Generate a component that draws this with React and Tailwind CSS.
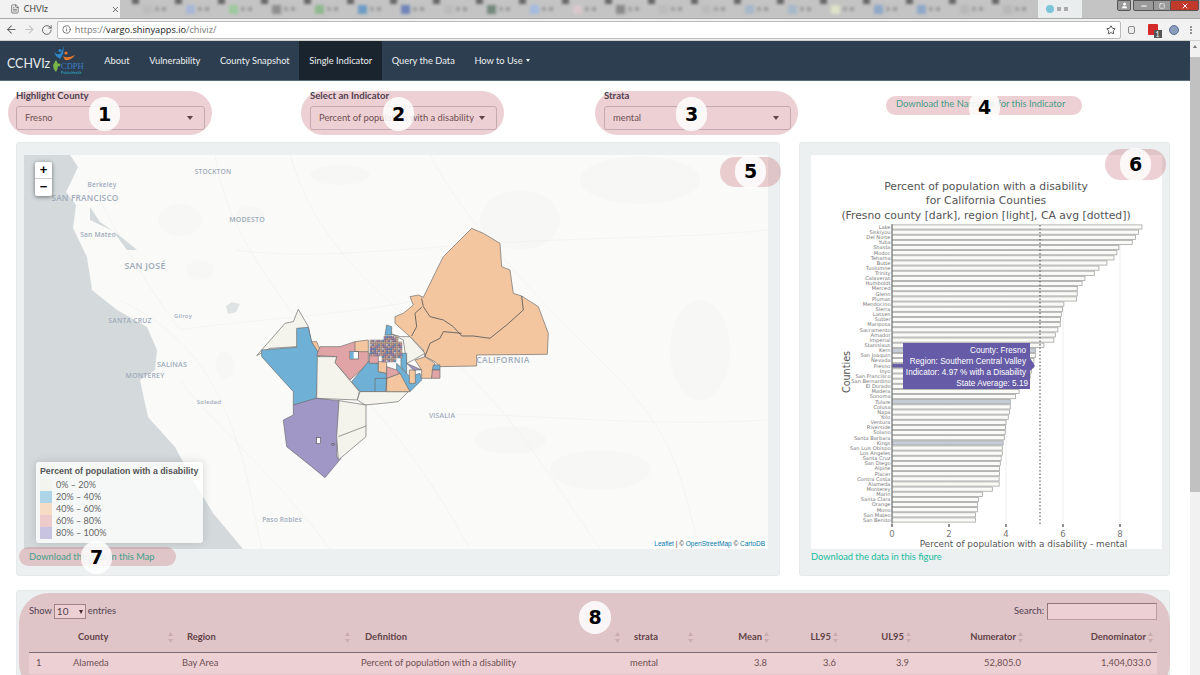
import React from 'react';
import { ArrowLeft, ArrowRight, RotateCw, Info, Star, FileText, X, Minus, Square, User } from 'lucide-react';

const TAB_ICONS = [
  'bg-[#bdbdbd]', 'bg-[#a9b8d8]', 'bg-[#9fc99f]', 'bg-[#8e8e8e]', 'bg-[#8fb88f]', 'bg-[#6f9cc4]', 'bg-[#6f84b8]',
  'bg-[#bcbcbc]', 'bg-[#75887c]', 'bg-[#a5bce0]', 'bg-[#d8c8cc]', 'bg-[#8a8a8a]', 'bg-[#bcbcbc]', 'bg-[#bcbcbc]',
  'bg-[#a8b8c8]', 'bg-[#a8b8c8]', 'bg-[#dde2c8]', 'bg-[#8fa8c8]', 'bg-[#8fa8c8]', 'bg-[#b8b8b8]', 'bg-[#b8b8b8]',
];

const NAV = ['About', 'Vulnerability', 'County Snapshot', 'Single Indicator', 'Query the Data'];

const COUNTIES = [
  ['Lake', 8.77], ['Siskiyou', 8.65], ['Del Norte', 8.54], ['Yuba', 8.43], ['Shasta', 7.96], ['Modoc', 7.89],
  ['Tehama', 7.79], ['Butte', 7.54], ['Tuolumne', 7.26], ['Trinity', 7.1], ['Calaveras', 6.77], ['Humboldt', 6.67],
  ['Merced', 6.5], ['Glenn', 6.5], ['Plumas', 6.47], ['Mendocino', 6.03], ['Sierra', 5.98], ['Lassen', 5.94],
  ['Sutter', 5.91], ['Mariposa', 5.9], ['Sacramento', 5.82], ['Amador', 5.73], ['Imperial', 5.68], ['Stanislaus', 5.33],
  ['Kern', 5.03], ['San Joaquin', 5.03], ['Nevada', 4.98], ['Fresno', 4.97], ['Inyo', 4.9], ['San Francisco', 4.85],
  ['San Bernardino', 4.8], ['El Dorado', 4.7], ['Madera', 4.46], ['Sonoma', 4.33], ['Tulare', 4.15], ['Colusa', 4.15],
  ['Napa', 4.12], ['Yolo', 4.08], ['Ventura', 4.0], ['Riverside', 3.98], ['Solano', 3.97], ['Santa Barbara', 3.94],
  ['Kings', 3.9], ['San Luis Obispo', 3.87], ['Los Angeles', 3.87], ['Santa Cruz', 3.83], ['San Diego', 3.8], ['Alpine', 3.77],
  ['Placer', 3.77], ['Contra Costa', 3.76], ['Alameda', 3.76], ['Monterey', 3.52], ['Marin', 3.17], ['Santa Clara', 3.03],
  ['Orange', 3.0], ['Mono', 3.0], ['San Mateo', 2.93], ['San Benito', 2.93],
];
const REGION = ['Kern', 'Tulare', 'Kings'];

const BLUE = '#6fb1d6';
const ORANGE = '#f3c6a0';
const PINK = '#e0a3a6';
const PURPLE = '#a197c7';
const CREAM = '#f4f3ec';

// traced by eye from the crop, coordinates are crop pixels (3x)
const TRACTS = [
  [ORANGE, '695,55 730,70 780,100 785,170 810,180 820,250 845,258 895,290 925,370 922,433 710,435 710,468 600,470 585,455 555,440 550,420 510,380 465,340 465,320 490,310 520,285 510,260 535,255 550,262 590,180 610,140'],
  [CREAM, '175,298 205,350 215,400 170,410 90,415 50,437 135,340 160,335'],
  [BLUE, '65,420 170,412 170,355 205,352 215,395 240,435 230,540 228,575 205,578 160,585 160,545 65,440'],
  [ORANGE, '215,395 230,395 245,430 240,435'],
  [PINK, '240,410 300,410 345,395 385,425 385,460 330,510 285,458 290,440 230,437'],
  [CREAM, '232,440 290,440 285,458 358,545 352,570 230,565'],
  [BLUE, '335,515 385,455 415,460 415,485 440,490 440,545 360,545'],
  [ORANGE, '345,395 385,390 385,425 345,425'],
  [CREAM, '360,545 430,545 505,545 475,575 430,580 375,585 352,570'],
  [PURPLE, '160,585 228,565 297,572 290,740 303,745 255,803 215,770 140,710 130,630 160,615'],
  [CREAM, '297,572 378,585 378,680 295,750 290,680'],
  [BLUE, '470,460 510,500 540,490 545,510 510,545 470,490'],
  [ORANGE, '440,505 480,490 510,545 437,545'],
  [ORANGE, '415,455 440,455 440,490 415,485'],
  [PINK, '440,470 470,480 480,490 440,505'],
  [ORANGE, '508,480 526,480 526,520 508,520'],
  [CREAM, '450,370 480,380 510,380 555,430 520,450 500,460 490,390'],
  [PURPLE, '500,460 545,480 520,480'],
  [ORANGE, '525,450 555,440 585,460 575,505 545,505 545,480'],
  [BLUE, '580,465 600,465 600,480 577,480'],
  [PINK, '577,480 600,480 600,505 575,505'],
  [BLUE, '440,345 455,350 455,375 435,375'],
  [PINK, '388,430 415,425 415,460 388,460'],
  [BLUE, '483,430 500,430 500,490 483,470'],
];

const CITY_COLORS = [BLUE, PINK, ORANGE, PURPLE, CREAM, PINK, PURPLE, ORANGE];
const CITY_CELLS = [];
for (let r = 0; r < 13; r++) {
  for (let c = 0; c < 16; c++) {
    if ((r < 2 && c < 7) || (r > 9 && c < 6) || (r > 10 && c > 12) || (r < 3 && c > 13)) continue;
    CITY_CELLS.push({ x: 390 + c * 6, y: 378 + r * 6, fill: CITY_COLORS[(r * 5 + c * 3 + r * c * 7) % 8] });
  }
}

const ROADS = [
  'M215 155 C225 210 240 240 290 310 S400 420 470 549',
  'M120 300 C160 320 200 350 225 410 S250 500 262 549',
  'M290 155 C310 220 340 260 420 330 S520 430 600 549',
  'M430 155 C470 230 540 300 610 370 S680 480 700 549',
  'M236 250 C320 262 420 245 560 240 S700 236 768 230',
  'M180 330 C240 320 340 316 420 300',
  'M440 415 C520 412 640 428 768 420',
  'M180 380 C200 410 280 480 330 549',
  'M100 200 C120 240 150 290 180 330',
];

const BLOTCHES = [
  [200, 270, 14, 10], [225, 365, 9, 14], [250, 215, 14, 9], [640, 180, 60, 24], [600, 470, 50, 20],
  [520, 220, 40, 30], [700, 350, 30, 50], [180, 220, 22, 16], [340, 175, 30, 10], [510, 440, 36, 14],
];

const MAP_LABELS = [
  ['STOCKTON', 213, 174, 6.6],
  ['Berkeley', 102, 187, 6.5],
  ['SAN FRANCISCO', 85, 201, 8.3],
  ['MODESTO', 247, 222, 7],
  ['San Mateo', 98, 237, 6.6],
  ['SAN JOSÉ', 145, 269, 8.9],
  ['SANTA CRUZ', 130, 323, 6.8],
  ['Gilroy', 183, 318, 5.9],
  ['SALINAS', 172, 367, 7.1],
  ['MONTEREY', 145, 378, 6.9],
  ['Soledad', 209, 404, 6],
  ['Paso Robles', 282, 522, 6.5],
  ['CALIFORNIA', 503, 363, 8.5],
  ['VISALIA', 442, 418, 6.8],
];

const LEGEND = [
  ['bg-[#f4f3ec]', '0% – 20%'],
  ['bg-[#a6cfe6]', '20% – 40%'],
  ['bg-[#f6d8be]', '40% – 60%'],
  ['bg-[#ecc4c5]', '60% – 80%'],
  ['bg-[#c3bcdd]', '80% – 100%'],
];

const OVALS = [
  'left-[8px] top-[91px] w-[204px] h-[44px] rounded-[22px]',
  'left-[301px] top-[91px] w-[203px] h-[44px] rounded-[22px]',
  'left-[595px] top-[91px] w-[203px] h-[44px] rounded-[22px]',
  'left-[886px] top-[96px] w-[196px] h-[19px] rounded-[10px]',
  'left-[720px] top-[157px] w-[61px] h-[30px] rounded-[15px]',
  'left-[1105px] top-[149px] w-[61px] h-[31px] rounded-[16px]',
  'left-[19px] top-[547px] w-[157px] h-[19px] rounded-[10px]',
  'left-[19px] top-[593px] w-[1151px] h-[100px] rounded-[30px]',
];

const BADGES = [
  ['1', 'left-[89px] top-[97px] w-[31px] h-[34px]'],
  ['2', 'left-[383px] top-[97px] w-[31px] h-[34px]'],
  ['3', 'left-[676px] top-[97px] w-[31px] h-[34px]'],
  ['4', 'left-[969px] top-[90px] w-[31px] h-[34px]'],
  ['5', 'left-[735px] top-[155px] w-[31px] h-[33px]'],
  ['6', 'left-[1120px] top-[148px] w-[31px] h-[33px]'],
  ['7', 'left-[81px] top-[541px] w-[31px] h-[33px]'],
  ['8', 'left-[579px] top-[601px] w-[32px] h-[33px]'],
];

const COLUMNS = [
  { label: '', w: 'w-[37px]' },
  { label: 'County', w: 'w-[109px]', pad: 'pl-[12px] pr-[2px]' },
  { label: 'Region', w: 'w-[179px]', pad: 'pl-[12px] pr-[4px]' },
  { label: 'Definition', w: 'w-[269px]', pad: 'pl-[11px] pr-[3px]' },
  { label: 'strata', w: 'w-[70px]', pad: 'pl-[11px]' },
  { label: 'Mean', w: 'w-[80px]', right: true },
  { label: 'LL95', w: 'w-[69px]', right: true },
  { label: 'UL95', w: 'w-[73px]', right: true },
  { label: 'Numerator', w: 'w-[112px]', right: true },
  { label: 'Denominator', w: 'w-[130px]', right: true },
];

const ROW = ['1', 'Alameda', 'Bay Area', 'Percent of population with a disability', 'mental', '3.8', '3.6', '3.9', '52,805.0', '1,404,033.0'];

const SortIcon = () => (
  <svg width="5" height="11" viewBox="0 0 5 11" className="shrink-0">
    <path d="M2.5 0 L5 4 H0 Z M2.5 11 L0 7 H5 Z" fill="#cfcfcf" />
  </svg>
);

const Caret = () => <span className="w-0 h-0 border-x-[3.5px] border-x-transparent border-t-[4px] border-t-[#444]" />;

const SelectBox = ({ label, value, width }) => (
  <div className="flex flex-col">
    <span className="text-[9.6px] font-bold text-[#2c3e50] leading-[12px] mt-[9px] mb-[4px]">{label}</span>
    <div className={`${width} h-[24px] bg-white border border-[#c8cdd0] rounded-[3px] flex items-center justify-between pl-[8px] pr-[11px] text-[9.4px] text-[#555] whitespace-nowrap`}>
      <span>{value}</span>
      <Caret />
    </div>
  </div>
);

const ChromeBar = () => (
  <>
    <div className="h-[18px] bg-[#c4c4c4] flex items-stretch relative overflow-hidden">
      <div className="w-[120px] bg-[#f2f2f2] flex items-center pl-[10px] gap-[4px] text-[8.5px] text-[#444] shrink-0">
        <FileText size={10} strokeWidth={1.5} />
        <span className="w-[85px]">CHVIz</span>
        <X size={9} strokeWidth={2} />
      </div>
      <div className="w-[15px] shrink-0" />
      {TAB_ICONS.map((c, i) => (
        <div key={i} className="w-[43px] shrink-0 flex items-center gap-[3px] pl-[8px] relative">
          <span className="absolute left-[-3px] top-[-2px] w-[7px] h-[6px] bg-[#666] blur-[1.5px]" />
          <span className={`${c} w-[9px] h-[9px] blur-[1.5px]`} />
          <span className="w-[4px] h-[4px] bg-[#a0a0a0] blur-[1.5px]" />
          <span className="w-[4px] h-[4px] bg-[#999] blur-[1.5px]" />
        </div>
      ))}
      <div className="w-[44px] shrink-0 bg-[#e9eded] flex items-center gap-[3px] pl-[8px] blur-[0.6px]">
        <span className="w-[8px] h-[8px] rounded-full bg-[#7cc4d8]" />
        <span className="w-[4px] h-[4px] bg-[#aaa]" />
        <span className="w-[4px] h-[4px] bg-[#aaa]" />
      </div>
      <div className="absolute right-[1px] top-0 h-[11px] flex text-white">
        <span className="w-[14px] bg-[#9a9a9a] border border-[#555] rounded-b-[2px] flex items-center justify-center mr-[2px]"><User size={7} fill="white" /></span>
        <span className="w-[21px] bg-[#9a9a9a] border border-[#555] flex items-center justify-center rounded-bl-[2px]"><Minus size={8} strokeWidth={3} /></span>
        <span className="w-[16px] bg-[#9a9a9a] border-y border-[#555] flex items-center justify-center"><Square size={6} strokeWidth={2.5} /></span>
        <span className="w-[29px] bg-[#c0392b] border border-[#555] flex items-center justify-center rounded-br-[2px]"><X size={8} strokeWidth={3} /></span>
      </div>
    </div>
    <div className="h-[23px] bg-[#f2f2f2] flex items-center pl-[4px] pr-[8px] border-t border-[#a8a8a8] border-b border-b-[#d0d0d0]">
      <ArrowLeft size={13} className="text-[#666] ml-[1px]" />
      <ArrowRight size={13} className="text-[#c4c4c4] ml-[5px]" />
      <RotateCw size={12} className="text-[#666] ml-[6px]" />
      <div className="ml-[4px] w-[1064px] h-[18px] bg-white border border-[#bbb] rounded-[2px] flex items-center pl-[4px] pr-[4px] text-[9.2px] font-['Open_Sans',sans-serif] shrink-0">
        <Info size={9} className="text-[#555] mr-[4px]" />
        <span className="text-[#777]">https://</span>
        <span className="text-[#222]">vargo.shinyapps.io</span>
        <span className="text-[#777]">/chiviz/</span>
        <Star size={10} className="ml-auto text-[#333]" />
      </div>
      <span className="ml-[7px] w-[7px] h-[8px] rounded-[2px] border border-[#888] bg-[#eee]" />
      <span className="ml-[13px] w-[11px] h-[11px] bg-[#d42a2a] rounded-[1px] relative">
        <span className="absolute left-[6px] top-[6px] w-[8px] h-[8px] bg-[#555] text-white text-[7px] leading-[8px] text-center">1</span>
      </span>
      <span className="ml-[11px] w-[10px] h-[10px] rounded-full bg-[#8a9bbd] border border-[#5d6f95]" />
      <span className="ml-[11px] flex flex-col gap-[1px]">
        <span className="w-[2px] h-[2px] rounded-full bg-[#777]" />
        <span className="w-[2px] h-[2px] rounded-full bg-[#777]" />
        <span className="w-[2px] h-[2px] rounded-full bg-[#777]" />
      </span>
    </div>
  </>
);

const Logo = () => (
  <svg width="33" height="32" viewBox="0 0 33 32" className="shrink-0">
    <circle cx="7" cy="5.5" r="1.6" fill="#2f86c8" />
    <path d="M1 7 Q5 11 8 8 L11 1 L10 9 L7 14 L3 11 Z" fill="#2f86c8" />
    <circle cx="13" cy="8" r="1.6" fill="#e8782c" />
    <path d="M10 11 Q14 14 22 10 Q18 16 12 15 Z" fill="#e8782c" />
    <path d="M3 15 Q7 20 3 27 Q0 24 0 20 Z" fill="#7ab648" />
    <circle cx="6" cy="20" r="1.4" fill="#7ab648" />
    <text x="8" y="24" fontFamily="'Liberation Serif', serif" fontSize="8.5" fill="#3f7fc0">CDPH</text>
    <text x="8" y="29" fontFamily="'Liberation Sans', sans-serif" fontSize="3.4" fontWeight="700" fill="#2e9ab0">PublicHealth</text>
  </svg>
);

const Navbar = () => (
  <nav className="h-[40px] bg-[#2c3e50] border-b border-[#5a6b7a] flex items-stretch text-[9.3px] text-[#ecf0f1] shrink-0">
    <div className="w-[94.5px] flex items-center pl-[7px] gap-[3px] shrink-0">
      <span className="text-[12.4px] leading-none mt-[7px]">CCHVIz</span>
      <Logo />
    </div>
    {NAV.map((item) => (
      <div key={item} className={`flex items-center px-[9.8px] ${item === 'Single Indicator' ? 'bg-[#1a242f]' : ''}`}>{item}</div>
    ))}
    <div className="flex items-center px-[9.8px] gap-[3px]">
      How to Use
      <span className="w-0 h-0 border-x-[2.5px] border-x-transparent border-t-[3px] border-t-[#ecf0f1]" />
    </div>
  </nav>
);

const MapPanel = () => (
  <div className="w-[744px] h-[394px] relative overflow-hidden bg-[#d4dadc]">
    <svg viewBox="24 155 744 394" width="744" height="394" className="block">
      <path
        d="M70 155 L78 167 L72 180 L66 192 L76 205 L73 228 L87 257 L92 290 L117 310 L147 327 L157 350 L155 370 L140 380 L148 417 L175 447 L190 475 L213 513 L243 549 L768 549 L768 155 Z"
        fill="#fafaf8"
      />
      {BLOTCHES.map(([x, y, rx, ry], i) => (
        <ellipse key={i} cx={x} cy={y} rx={rx} ry={ry} fill="#f7f8f5" />
      ))}
      {ROADS.map((d, i) => (
        <path key={i} d={d} fill="none" stroke="#f0f0ee" strokeWidth="0.7" />
      ))}
      <path d="M90 207 L100 222 L120 236 L137 250 L127 250 L113 231 L90 220 Z" fill="#d4dadc" />
      <path d="M226 306 L232 302 L240 304 L236 312 L228 314 Z" fill="#dfe3e4" />
      <g transform="translate(240 210) scale(0.3333)">
        {TRACTS.map(([fill, points], i) => (
          <polygon key={i} points={points} fill={fill} stroke="#6b6b6b" strokeWidth="2" strokeLinejoin="round" />
        ))}
        <path d="M845 258 L850 300 L800 345 L750 385 L700 378 L665 378 L640 350 L610 330 L570 320 L550 290 L545 265 M545 292 L525 310 L530 350 L515 378 M665 370 L610 365 L600 385 L570 400 L555 440" fill="none" stroke="#555" strokeWidth="2.5" />
        <path d="M295 680 L378 648 M405 505 H440 V545 M405 505 V545" fill="none" stroke="#666" strokeWidth="2" />
        <rect x="330" y="425" width="25" height="22" fill="#fff" stroke="#555" strokeWidth="2" />
        <rect x="330" y="425" width="11" height="22" fill={BLUE} />
        <rect x="230" y="683" width="12" height="18" fill="#fff" stroke="#555" strokeWidth="2" />
        <ellipse cx="279" cy="703" rx="5" ry="3" fill={PURPLE} stroke="#555" strokeWidth="2" />
        {CITY_CELLS.map((c, i) => (
          <rect key={i} x={c.x} y={c.y} width="6" height="6" fill={c.fill} stroke="#55556a" strokeWidth="1" />
        ))}
      </g>
      {MAP_LABELS.map(([text, x, y, size]) => (
        <text key={text} x={x} y={y} textAnchor="middle" fontSize={size} fontFamily="'Open Sans', sans-serif" fontWeight="600" fill="#a0abba" letterSpacing={text === 'CALIFORNIA' ? 0.4 : 0.2}>
          {text}
        </text>
      ))}
    </svg>

    <div className="absolute left-[11px] top-[7px] w-[17px] bg-white rounded-[2px] shadow-[0_1px_4px_rgba(0,0,0,0.5)] text-black font-['Liberation_Sans',sans-serif] font-bold text-[13px] text-center leading-[16px]">
      <div className="h-[17px] border-b border-[#ccc]">+</div>
      <div className="h-[17px]">−</div>
    </div>

    <div className="absolute left-[12px] top-[307px] w-[167px] h-[81px] bg-white/80 rounded-[3px] shadow-[0_0_8px_rgba(0,0,0,0.15)] pl-[4px] pt-[4px] font-['Liberation_Sans',sans-serif]">
      <div className="text-[8.8px] font-bold text-[#555] leading-[11px] pb-[2px] whitespace-nowrap">Percent of population with a disability</div>
      {LEGEND.map(([color, text]) => (
        <div key={text} className="flex items-center h-[12px]">
          <span className={`${color} w-[12px] h-[12px] opacity-90`} />
          <span className="ml-[4px] text-[9px] text-[#666] font-['Lato',sans-serif]">{text}</span>
        </div>
      ))}
    </div>

    <div className="absolute right-0 bottom-0 h-[10px] px-[3px] bg-white/70 text-[6.5px] leading-[10px] text-[#333] font-['Liberation_Sans',sans-serif] whitespace-nowrap">
      <span className="text-[#0078a8]">Leaflet</span> | © <span className="text-[#0078a8]">OpenStreetMap</span> © <span className="text-[#0078a8]">CartoDB</span>
    </div>
  </div>
);

const ChartPanel = () => {
  const x0 = 892;
  const unit = 28.5;
  const top = 227;
  const step = 5.14;
  const font = "'DejaVu Sans', sans-serif";
  return (
    <div className="w-[351px] h-[394px] bg-white">
      <svg viewBox="811 155 351 394" width="351" height="394" className="block">
        <g fontFamily={font} fill="#555" textAnchor="middle" fontSize="10.8">
          <text x="986" y="190">Percent of population with a disability</text>
          <text x="986" y="204">for California Counties</text>
          <text x="986" y="219">(Fresno county [dark], region [light], CA avg [dotted])</text>
        </g>
        {[2, 4, 6, 8].map((v) => (
          <line key={v} x1={x0 + v * unit} x2={x0 + v * unit} y1="224" y2="523" stroke="#eeeeee" />
        ))}
        {COUNTIES.map(([name, value], i) => {
          const y = top + i * step;
          const fill = name === 'Fresno' ? '#655ba6' : REGION.includes(name) ? '#c6ccd6' : '#fafaf6';
          return (
            <g key={name}>
              <rect x={x0} y={y - 2.1} width={value * unit} height="4.2" fill={fill} stroke="#a3a3a3" strokeWidth="0.8" />
              <text x={x0 - 1.5} y={y + 1.8} textAnchor="end" fontSize="5.1" fontFamily={font} fill="#777">{name}</text>
            </g>
          );
        })}
        <line x1={x0} x2={x0} y1="224" y2="524" stroke="#555" strokeWidth="0.8" />
        <line x1="1040" x2="1040" y1="225" y2="524" stroke="#666" strokeWidth="1.2" strokeDasharray="1.5 2" />
        {[0, 2, 4, 6, 8].map((v) => (
          <g key={v}>
            <line x1={x0 + v * unit} x2={x0 + v * unit} y1="524" y2="527" stroke="#222" />
            <text x={x0 + v * unit} y="537" textAnchor="middle" fontSize="8.5" fontFamily={font} fill="#777">{v}</text>
          </g>
        ))}
        <text x="1023.5" y="547" textAnchor="middle" fontSize="8.9" fontFamily={font} fill="#555">Percent of population with a disability - mental</text>
        <text transform="translate(850 372) rotate(-90)" textAnchor="middle" fontSize="9.6" fontFamily={font} fill="#555">Counties</text>
        <path d="M903 343 H1030 V389 H903 Z M1030 358 L1035 366 L1030 371 Z" fill="#655ba6" />
        <g fontFamily="'Liberation Sans', sans-serif" fontSize="8.2" fill="#fff" textAnchor="end">
          <text x="1026" y="353">County: Fresno</text>
          <text x="1026" y="364">Region: Southern Central Valley</text>
          <text x="1026" y="375">Indicator: 4.97 % with a Disability</text>
          <text x="1028" y="386">State Average: 5.19</text>
        </g>
      </svg>
    </div>
  );
};

const DataTable = () => (
  <div className="bg-[#ecf0f1] border border-[#e6eaeb] rounded-[3px] mt-[14px] ml-[16px] w-[1154px] h-[200px] pt-[12px] pl-[12px] text-[9.4px] text-[#2c3e50] shrink-0">
    <div className="w-[1128px] flex items-center justify-between h-[17px]">
      <div className="flex items-center gap-[2px]">
        Show
        <span className="w-[32px] h-[15px] bg-white border border-[#999] flex items-center justify-between px-[2px] text-[10px]">
          10
          <span className="w-0 h-0 border-x-[2.5px] border-x-transparent border-t-[4px] border-t-[#222]" />
        </span>
        entries
      </div>
      <div className="flex items-center gap-[3px]">
        Search:
        <span className="w-[110px] h-[17px] bg-white border border-[#bbb] border-t-[#888] border-l-[#888]" />
      </div>
    </div>
    <table className="table-fixed w-[1128px] mt-[6px] border-collapse">
      <colgroup>
        {COLUMNS.map((c, i) => <col key={i} className={c.w} />)}
      </colgroup>
      <thead>
        <tr className="border-b border-[#2c3e50]/70 h-[26px]">
          {COLUMNS.map((c, i) => (
            <th key={i} className={`font-bold text-[#444] p-0 pb-[3px] ${c.right ? 'pr-[4px]' : ''}`}>
              {c.label && (
                <div className={`flex items-center ${c.right ? 'justify-end gap-[2px]' : `justify-between ${c.pad}`}`}>
                  {c.label}
                  <SortIcon />
                </div>
              )}
            </th>
          ))}
        </tr>
      </thead>
      <tbody>
        <tr className="bg-white h-[22px]">
          {ROW.map((cell, i) => (
            <td key={i} className={`text-[#555] p-0 ${COLUMNS[i].right ? 'text-right pr-[6px]' : 'pl-[7px]'}`}>{cell}</td>
          ))}
        </tr>
      </tbody>
    </table>
  </div>
);

export default function App() {
  return (
    <div className="w-[1200px] h-[675px] overflow-hidden relative bg-white font-['Lato',sans-serif] flex flex-col">
      <ChromeBar />
      <div className="flex flex-1 min-h-0">
        <main className="w-[1190px] flex flex-col overflow-hidden">
          <Navbar />
          <div className="h-[61px] pl-[16px] grid grid-cols-[294px_294px_292px_1fr] shrink-0">
            <SelectBox label="Highlight County" value="Fresno" width="w-[189px]" />
            <SelectBox label="Select an Indicator" value="Percent of population with a disability" width="w-[187px]" />
            <SelectBox label="Strata" value="mental" width="w-[187px]" />
            <a className="text-[9.4px] text-[#18bc9c] mt-[16px] leading-[14px]">Download the Narrative for this Indicator</a>
          </div>
          <div className="flex pl-[16px] gap-[19px] shrink-0">
            <section className="w-[764px] h-[434px] bg-[#ecf0f1] border border-[#e6eaeb] rounded-[3px] pt-[12px] pl-[7px]">
              <MapPanel />
              <a className="block text-[9.3px] text-[#18bc9c] ml-[5px] mt-[1px] leading-[14px]">Download the data in this Map</a>
            </section>
            <section className="w-[371px] h-[434px] bg-[#ecf0f1] border border-[#e6eaeb] rounded-[3px] pt-[12px] pl-[11px]">
              <ChartPanel />
              <a className="block text-[9.3px] text-[#18bc9c] mt-[1px] leading-[14px]">Download the data in this figure</a>
            </section>
          </div>
          <DataTable />
        </main>
        <div className="w-[10px] bg-[#f1f1f1] flex flex-col items-center">
          <span className="mt-[4px] w-0 h-0 border-x-[2.5px] border-x-transparent border-b-[3px] border-b-[#777]" />
          <span className="mt-[9px] w-full h-[435px] bg-[#c1c1c1]" />
        </div>
      </div>

      {/* numbered annotations sit on top of the screenshot */}
      {OVALS.map((cls) => (
        <div key={cls} className={`absolute bg-[#b8454f]/25 pointer-events-none ${cls}`} />
      ))}
      {BADGES.map(([n, cls]) => (
        <div key={n} className={`absolute rounded-full bg-white/85 flex items-center justify-center text-black text-[19px] font-bold font-['DejaVu_Sans',sans-serif] ${cls}`}>
          {n}
        </div>
      ))}
    </div>
  );
}
